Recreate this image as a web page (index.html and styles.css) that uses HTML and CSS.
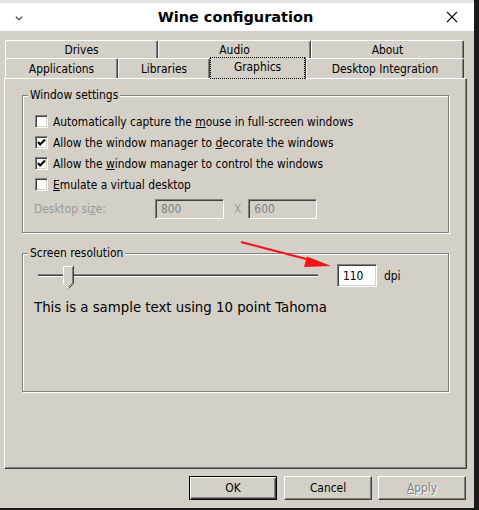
FILE: index.html
```html
<!DOCTYPE html>
<html>
<head>
<meta charset="utf-8">
<link rel="stylesheet" href="styles.css">
</head>
<body>
<div class="window">
  <div class="titlebar">
    <svg class="chev" width="8" height="5" viewBox="0 0 8 5"><path d="M0.8 0.8 L4 3.8 L7.2 0.8" fill="none" stroke="#444" stroke-width="1.2"/></svg>
    <div class="title">Wine configuration</div>
    <svg class="close" width="12" height="12" viewBox="0 0 12 12"><path d="M1 1 L11 11 M11 1 L1 11" stroke="#111" stroke-width="1.1"/></svg>
  </div>
  <div class="client">
    <div class="tabs">
      <div class="tabrow back">
        <div class="tab w-third">Drives</div>
        <div class="tab w-third">Audio</div>
        <div class="tab w-third">About</div>
      </div>
      <div class="tabrow front">
        <div class="tab w-apps">Applications</div>
        <div class="tab w-libs">Libraries</div>
        <div class="tab w-gfx selected"><span class="focus">Graphics</span></div>
        <div class="tab w-desk">Desktop Integration</div>
      </div>
    </div>
    <div class="panel">
      <fieldset class="group g1">
        <legend>Window settings</legend>
        <div class="check"><span class="box"></span><span>Automatically capture the <u>m</u>ouse in full-screen windows</span></div>
        <div class="check"><span class="box"><svg width="11" height="11" viewBox="0 0 11 11"><path d="M2 5 L4.2 7.5 L9 2.5" fill="none" stroke="#000" stroke-width="2"/></svg></span><span>Allow the window manager to <u>d</u>ecorate the windows</span></div>
        <div class="check"><span class="box"><svg width="11" height="11" viewBox="0 0 11 11"><path d="M2 5 L4.2 7.5 L9 2.5" fill="none" stroke="#000" stroke-width="2"/></svg></span><span>Allow the <u>w</u>indow manager to control the windows</span></div>
        <div class="check"><span class="box"></span><span><u>E</u>mulate a virtual desktop</span></div>
        <div class="size-row">
          <span class="size-label">Desktop si<u>z</u>e:</span>
          <span class="edit disabled w-size">800</span>
          <span class="x-label">X</span>
          <span class="edit disabled w-size">600</span>
        </div>
      </fieldset>
      <fieldset class="group g2">
        <legend>Screen resolution</legend>
        <div class="dpi-row">
          <div class="slider">
            <div class="track"></div>
            <svg class="thumb" width="12" height="24" viewBox="0 0 12 24">
              <path d="M0.5 17 V0.5 H10.5 V17 L5.5 22.5 Z" fill="#d4d0c8"/>
              <path d="M0.5 17.5 V0.5 H10" fill="none" stroke="#fff" stroke-width="1"/>
              <path d="M0.5 17.5 L5.5 22.5" fill="none" stroke="#fff" stroke-width="1"/>
              <path d="M10.5 0 V17.5 L5.5 22.5" fill="none" stroke="#404040" stroke-width="1"/>
              <path d="M9.5 1 V17 L5.5 21" fill="none" stroke="#808080" stroke-width="1"/>
            </svg>
          </div>
          <span class="edit dpi-edit">110</span>
          <span class="dpi-label">dpi</span>
        </div>
        <div class="sample">This is a sample text using 10 point Tahoma</div>
      </fieldset>
    </div>
    <div class="buttons">
      <div class="btn default">OK</div>
      <div class="btn">Cancel</div>
      <div class="btn disabled-btn"><u>A</u>pply</div>
    </div>
  </div>
  <svg class="arrow" width="474" height="508" viewBox="0 0 474 508">
    <line x1="241" y1="242" x2="312" y2="260.5" stroke="#f01414" stroke-width="2"/>
    <polygon points="331,266 307,256.5 304,267" fill="#f01414"/>
  </svg>
</div>
</body>
</html>
```

FILE: styles.css
```css
* { box-sizing: border-box; }
html, body { margin: 0; padding: 0; }
body {
  width: 479px;
  height: 510px;
  background: #1a1a1a;
  font-family: "DejaVu Sans Condensed", "DejaVu Sans", sans-serif;
  font-stretch: condensed;
  font-size: 11.9px;
  color: #000;
  overflow: hidden;
}
.window {
  position: relative;
  width: 474px;
  height: 508px;
  background: #d4d0c8;
}
.titlebar {
  height: 31px;
  background: #fff;
  border-top: 3px solid #e2e2e2;
  display: flex;
  align-items: center;
  justify-content: space-between;
  padding: 0 16px 0 15px;
}
.chev { display: block; margin-top: 2px; }
.title {
  font-family: "DejaVu Sans", sans-serif;
  font-stretch: normal;
  font-weight: bold;
  font-size: 14.5px;
  margin-left: 2px;
}
.close { display: block; }
.client {
  padding: 9px 8px 0 0;
}
.tabrow {
  display: flex;
  margin-left: 5px;
  width: 459px;
}
.tabrow.back { height: 18px; }
.tabrow.front { height: 20px; align-items: flex-end; }
.tab {
  height: 100%;
  border-top: 1px solid #fff;
  border-left: 1px solid #fff;
  border-right: 1px solid #404040;
  box-shadow: inset -1px 0 #808080;
  border-radius: 2px 2px 0 0;
  display: flex;
  align-items: center;
  justify-content: center;
  padding-top: 1px;
  white-space: nowrap;
}
.w-third { width: 153px; }
.w-apps { width: 113px; }
.w-libs { width: 92px; }
.w-gfx { width: 96px; }
.w-desk { width: 158px; }
.tab.selected {
  position: relative;
  z-index: 1;
  height: 22px;
  margin-bottom: -1px;
  background: #d4d0c8;
  padding: 0;
  border: 0;
  box-shadow: none;
  border-right: 1px solid #404040;
}
.focus {
  width: 100%;
  height: 100%;
  border: 1px dotted #000;
  display: flex;
  align-items: center;
  justify-content: center;
  padding-bottom: 2px;
}
.panel {
  margin-left: 4px;
  width: 463px;
  height: 391px;
  border-top: 1px solid #fff;
  border-left: 1px solid #fff;
  border-right: 1px solid #404040;
  border-bottom: 1px solid #404040;
  box-shadow: inset -1px -1px #808080;
  padding-top: 9px;
}
.group {
  margin: 0 0 0 17px;
  width: 427px;
  border: 1px solid #808080;
  box-shadow: inset 1px 1px #fff, 1px 1px #fff;
  padding: 0 0 0 12px;
  min-width: 0;
}
.group legend {
  padding: 0 2px;
  margin-left: -7px;
  line-height: 14px;
  background: #d4d0c8;
}
.g1 { padding-top: 9px; padding-bottom: 13px; }
.g2 { margin-top: 13px; padding-top: 4px; padding-bottom: 75px; }
.check {
  height: 21px;
  display: flex;
  align-items: center;
  gap: 5px;
}
.box {
  width: 13px;
  height: 13px;
  background: #fff;
  border-top: 1px solid #808080;
  border-left: 1px solid #808080;
  border-right: 1px solid #fff;
  border-bottom: 1px solid #fff;
  box-shadow: inset 1px 1px #404040, inset -1px -1px #d4d0c8;
  display: flex;
  align-items: center;
  justify-content: center;
}
.box svg { display: block; }
.size-row {
  margin-top: 4px;
  display: flex;
  align-items: center;
  height: 20px;
}
.size-label {
  width: 121px;
  margin-left: -1px;
  color: #9a9a9a;
}
.edit {
  height: 20px;
  border-top: 1px solid #808080;
  border-left: 1px solid #808080;
  border-right: 1px solid #fff;
  border-bottom: 1px solid #fff;
  box-shadow: inset 1px 1px #404040, inset -1px -1px #d4d0c8;
  display: flex;
  align-items: center;
  padding-left: 5px;
}
.edit.disabled {
  background: #d4d0c8;
  color: #808080;
}
.w-size { width: 69px; }
.x-label {
  color: #9a9a9a;
  margin: 0 7px 0 10px;
}
.dpi-row {
  display: flex;
  align-items: center;
  height: 23px;
}
.slider {
  position: relative;
  margin-left: 3px;
  width: 280px;
  height: 23px;
  display: flex;
  align-items: center;
}
.track {
  width: 100%;
  height: 3px;
  border-top: 1px solid #808080;
  border-bottom: 1px solid #fff;
  background: #404040;
}
.thumb {
  position: absolute;
  left: 25px;
  top: 2px;
}
.dpi-edit {
  margin-left: 19px;
  width: 40px;
  height: 23px;
  background: #fff;
  padding-left: 5px;
}
.dpi-label { margin-left: 7px; }
.sample {
  margin-top: 11px;
  margin-left: -1px;
  font-size: 14.8px;
  line-height: 18px;
}
.buttons {
  margin-top: 7px;
  display: flex;
  justify-content: flex-end;
  gap: 6px;
}
.btn {
  width: 88px;
  height: 24px;
  border-top: 1px solid #fff;
  border-left: 1px solid #fff;
  border-right: 1px solid #404040;
  border-bottom: 1px solid #404040;
  box-shadow: inset -1px -1px #808080;
  display: flex;
  align-items: center;
  justify-content: center;
}
.btn.default {
  margin-right: 1px;
  border: 1px solid #000;
  box-shadow: inset 1px 1px #fff, inset -1px -1px #404040, inset -2px -2px #808080;
}
.disabled-btn {
  color: #808080;
  text-shadow: 1px 1px #fff;
}
.arrow {
  position: absolute;
  left: 0;
  top: 0;
  pointer-events: none;
}
```
